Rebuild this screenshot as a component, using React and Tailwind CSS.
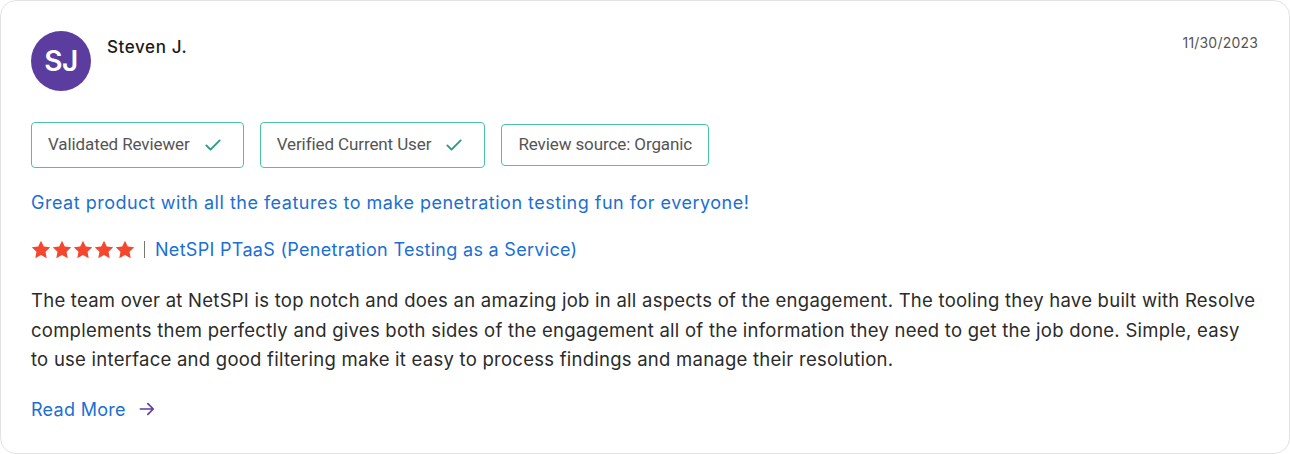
import React from "react";

const Check = () => (
  <svg width="20" height="20" viewBox="0 0 24 24" fill="none" stroke="#2a9d84" strokeWidth="2.3" strokeLinecap="round" strokeLinejoin="round">
    <path d="M4 12.5l5 5L20 6.5" />
  </svg>
);

const Star = () => (
  <svg width="20" height="19" viewBox="0 0 24 23">
    <path d="M12 0.8l3.4 7.1 7.8 1-5.7 5.4 1.4 7.7L12 18.3 5.1 22l1.4-7.7L0.8 8.9l7.8-1z" fill="#f4472d" />
  </svg>
);

const Badge = ({ label, checked }) => (
  <div
    className={`flex items-center gap-[13px] rounded-[4px] border border-[#49c3a6] pl-4 ${
      checked ? "h-[46px] pr-[20px]" : "h-[42px] pr-4"
    }`}
  >
    <span className="font-['Roboto',sans-serif] text-[17px] tracking-[-0.1px] text-[#555]">{label}</span>
    {checked && <Check />}
  </div>
);

export default function App() {
  return (
    <div className="h-[454px] w-full bg-white font-['Inter',sans-serif]">
      <div className="flex h-full flex-col rounded-2xl border border-[#e3e3e3] px-[30px] pt-[30px]">
        <div className="flex items-start justify-between">
          <div className="flex items-start gap-4">
            <div className="flex h-[60px] w-[60px] items-center justify-center rounded-full bg-[#5b3da0] text-[28px] font-semibold tracking-[-0.5px] text-white">
              SJ
            </div>
            <div className="pt-[4px] text-[17px] font-medium tracking-[0.6px] text-[#1c1c1c]">Steven J.</div>
          </div>
          <div className="pt-[1px] pr-[1px] text-[14px] tracking-[0.2px] text-[#555]">11/30/2023</div>
        </div>

        <div className="mt-[31px] flex items-center gap-4">
          <Badge label="Validated Reviewer" checked />
          <Badge label="Verified Current User" checked />
          <Badge label="Review source: Organic" />
        </div>

        <div className="mt-[21px] text-[18px] tracking-[0.5px] text-[#1a6fd4]">
          Great product with all the features to make penetration testing fun for everyone!
        </div>

        <div className="mt-[20px] flex items-center">
          <div className="flex gap-[1px]">
            <Star />
            <Star />
            <Star />
            <Star />
            <Star />
          </div>
          <div className="ml-[9px] mr-[10px] h-[17px] w-px bg-[#777]" />
          <span className="text-[18px] tracking-[0.3px] text-[#1a6fd4]">NetSPI PTaaS (Penetration Testing as a Service)</span>
        </div>

        <p className="mt-[23px] text-[18.5px] leading-[29.5px] tracking-[0.25px] text-[#2b2b2b]">
          The team over at NetSPI is top notch and does an amazing job in all aspects of the engagement. The tooling they have built with Resolve complements them perfectly and gives both sides of the engagement all of the information they need to get the job done. Simple, easy to use interface and good filtering make it easy to process findings and manage their resolution.
        </p>

        <div className="mt-[21px] flex items-center gap-[11px] text-[18px] tracking-[0.3px] text-[#1a6fd4]">
          <span>Read More</span>
          <svg width="20" height="20" viewBox="0 0 24 24" fill="none" stroke="#5b3da0" strokeWidth="2" strokeLinecap="round" strokeLinejoin="round">
            <path d="M4 12h15M13 5.5l6.5 6.5-6.5 6.5" />
          </svg>
        </div>
      </div>
    </div>
  );
}
